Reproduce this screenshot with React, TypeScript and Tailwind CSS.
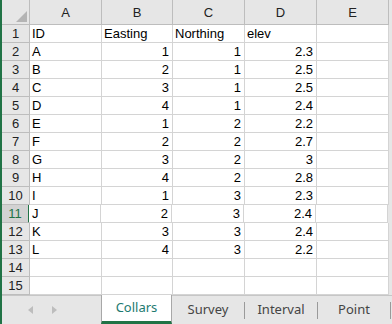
const cols = ["A", "B", "C", "D", "E"];
const widths = ["w-[72px]", "w-[71px]", "w-[72px]", "w-[72px]", "w-[72px]"];

const rows: (string | number)[][] = [
  ["ID", "Easting", "Northing", "elev"],
  ["A", 1, 1, 2.3],
  ["B", 2, 1, 2.5],
  ["C", 3, 1, 2.5],
  ["D", 4, 1, 2.4],
  ["E", 1, 2, 2.2],
  ["F", 2, 2, 2.7],
  ["G", 3, 2, 3],
  ["H", 4, 2, 2.8],
  ["I", 1, 3, 2.3],
  ["J", 2, 3, 2.4],
  ["K", 3, 3, 2.4],
  ["L", 4, 3, 2.2],
  [],
  [],
];

const tabs = ["Survey", "Interval", "Point"];

export default function App() {
  return (
    <div className="w-[392px] h-[324px] bg-[#e6e6e6] flex overflow-hidden font-['Liberation_Sans',sans-serif] text-[13px] text-black">
      <div className="w-[2px] bg-[#217346]" />
      <div className="flex-1 flex flex-col">
        {/* sheet */}
        <div className="flex flex-col">
          <div className="flex h-[25px]">
            <div className="w-[28px] border-r border-b border-[#bdbdbd] bg-[#e6e6e6] flex items-end justify-end pr-[2px] pb-[2px]">
              <svg width="11" height="11" viewBox="0 0 11 11">
                <polygon points="11,0 11,11 0,11" fill="#b4b4b4" />
              </svg>
            </div>
            {cols.map((c, i) => (
              <div
                key={c}
                className={`${widths[i]} border-r border-b border-[#bdbdbd] flex items-center justify-center text-[#222] pt-[1px]`}
              >
                {c}
              </div>
            ))}
          </div>
          {rows.map((r, ri) => {
            const sel = ri === 10;
            return (
              <div key={ri} className="flex h-[18px]">
                <div
                  className={
                    sel
                      ? "w-[28px] bg-[#d2d2d2] border-b border-[#bdbdbd] border-r-2 border-r-[#217346] flex items-center justify-center text-[#217346]"
                      : "w-[28px] bg-[#e6e6e6] border-r border-b border-[#bdbdbd] flex items-center justify-center text-[#222]"
                  }
                >
                  {ri + 1}
                </div>
                {cols.map((c, ci) => {
                  const v = r[ci];
                  const num = typeof v === "number";
                  return (
                    <div
                      key={c}
                      className={`${widths[ci]} bg-white border-r border-b border-[#d4d4d4] flex items-center ${
                        num ? "justify-end pr-[3px]" : "justify-start pl-[2px]"
                      } ${sel && ci === 0 ? "-ml-[1px] pl-[3px]" : ""}`}
                    >
                      {v ?? ""}
                    </div>
                  );
                })}
              </div>
            );
          })}
        </div>
        {/* tab bar */}
        <div className="flex-1 flex items-stretch border-t border-[#c6c6c6] font-['Noto_Sans',sans-serif] text-[13px] text-[#444]">
          <div className="w-[99px] flex items-center pl-[26px] gap-[19px] text-[#bdbdbd]">
            <svg width="5" height="8" viewBox="0 0 5 8">
              <polygon points="5,0 5,8 0,4" fill="currentColor" />
            </svg>
            <svg width="5" height="8" viewBox="0 0 5 8">
              <polygon points="0,0 0,8 5,4" fill="currentColor" />
            </svg>
          </div>
          <div className="w-[71px] -mt-[1px] bg-white border-x border-[#a8a8a8] border-b-[3px] border-b-[#217346] flex items-center justify-center text-[#1d7a70]">
            Collars
          </div>
          {tabs.map((t) => (
            <div key={t} className="flex items-center">
              <div className="w-[72px] text-center">{t}</div>
              <div className="w-px h-[17px] bg-[#9a9a9a]" />
            </div>
          ))}
        </div>
      </div>
    </div>
  );
}
